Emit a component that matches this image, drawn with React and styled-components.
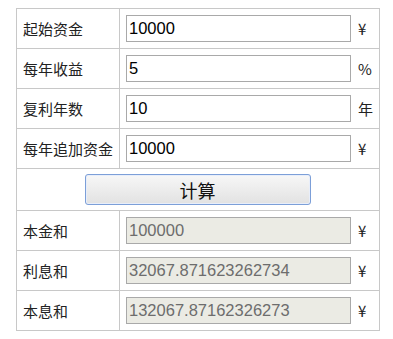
import React from 'react'
import styled, { createGlobalStyle } from 'styled-components'

const GlobalStyle = createGlobalStyle`
  body {
    margin: 0;
    background: #fff;
    font-family: 'Liberation Sans', 'Noto Sans CJK SC', sans-serif;
  }
`

const Page = styled.div`
  padding: 8px 0 0 16px;
`

const Table = styled.table`
  width: 363px;
  border-collapse: collapse;
  border: 1px solid #c8c8c8;
`

const Cell = styled.td`
  border: 1px solid #c8c8c8;
  padding: 6px;
  height: 27px;
  vertical-align: middle;
`

const LabelCell = styled(Cell)`
  width: 90px;
  font-size: 15px;
  color: #222;
  white-space: nowrap;
  font-family: 'Noto Sans CJK SC', sans-serif;
`

const Field = styled.div`
  display: flex;
  align-items: center;
  gap: 7px;
`

const Input = styled.input`
  box-sizing: border-box;
  width: 225px;
  height: 27px;
  margin: 0;
  padding: 0 2px;
  border: 1px solid #a9a9a9;
  border-radius: 0;
  font-family: 'Liberation Sans', sans-serif;
  font-size: 16.5px;
  color: ${(p) => (p.disabled ? '#6d6d6d' : '#000')};
  background: ${(p) => (p.disabled ? '#ebebe4' : '#fff')};
  outline: none;
`

const Unit = styled.span`
  font-size: 15px;
  color: #222;
  font-family: 'Noto Sans CJK SC', sans-serif;
`

const ButtonCell = styled.td`
  border: 1px solid #c8c8c8;
  padding: 5px 6px;
  text-align: center;
`

const CalcButton = styled.button`
  box-sizing: border-box;
  width: 226px;
  height: 31px;
  margin: 0 1px 0 0;
  border: 1px solid #7c9fd8;
  border-radius: 3px;
  background: linear-gradient(#f7f7f7, #e2e2e2);
  box-shadow: inset 0 0 0 1px #e8eefa;
  font-family: 'Noto Sans CJK SC', sans-serif;
  font-size: 18px;
  color: #111;
  padding: 0;
`

const inputs = [
  { label: '起始资金', value: '10000', unit: '¥' },
  { label: '每年收益', value: '5', unit: '%' },
  { label: '复利年数', value: '10', unit: '年' },
  { label: '每年追加资金', value: '10000', unit: '¥' },
]

const results = [
  { label: '本金和', value: '100000' },
  { label: '利息和', value: '32067.871623262734' },
  { label: '本息和', value: '132067.87162326273' },
]

const Row = ({ label, value, unit, disabled }) => (
  <tr>
    <LabelCell>{label}</LabelCell>
    <Cell>
      <Field>
        <Input defaultValue={value} disabled={disabled} />
        <Unit>{unit}</Unit>
      </Field>
    </Cell>
  </tr>
)

const App = () => {
  return (
    <>
      <GlobalStyle />
      <Page>
        <Table>
          <tbody>
            {inputs.map((r) => (
              <Row key={r.label} {...r} />
            ))}
            <tr>
              <ButtonCell colSpan={2}>
                <CalcButton>计算</CalcButton>
              </ButtonCell>
            </tr>
            {results.map((r) => (
              <Row key={r.label} {...r} unit="¥" disabled />
            ))}
          </tbody>
        </Table>
      </Page>
    </>
  )
}

export default App
